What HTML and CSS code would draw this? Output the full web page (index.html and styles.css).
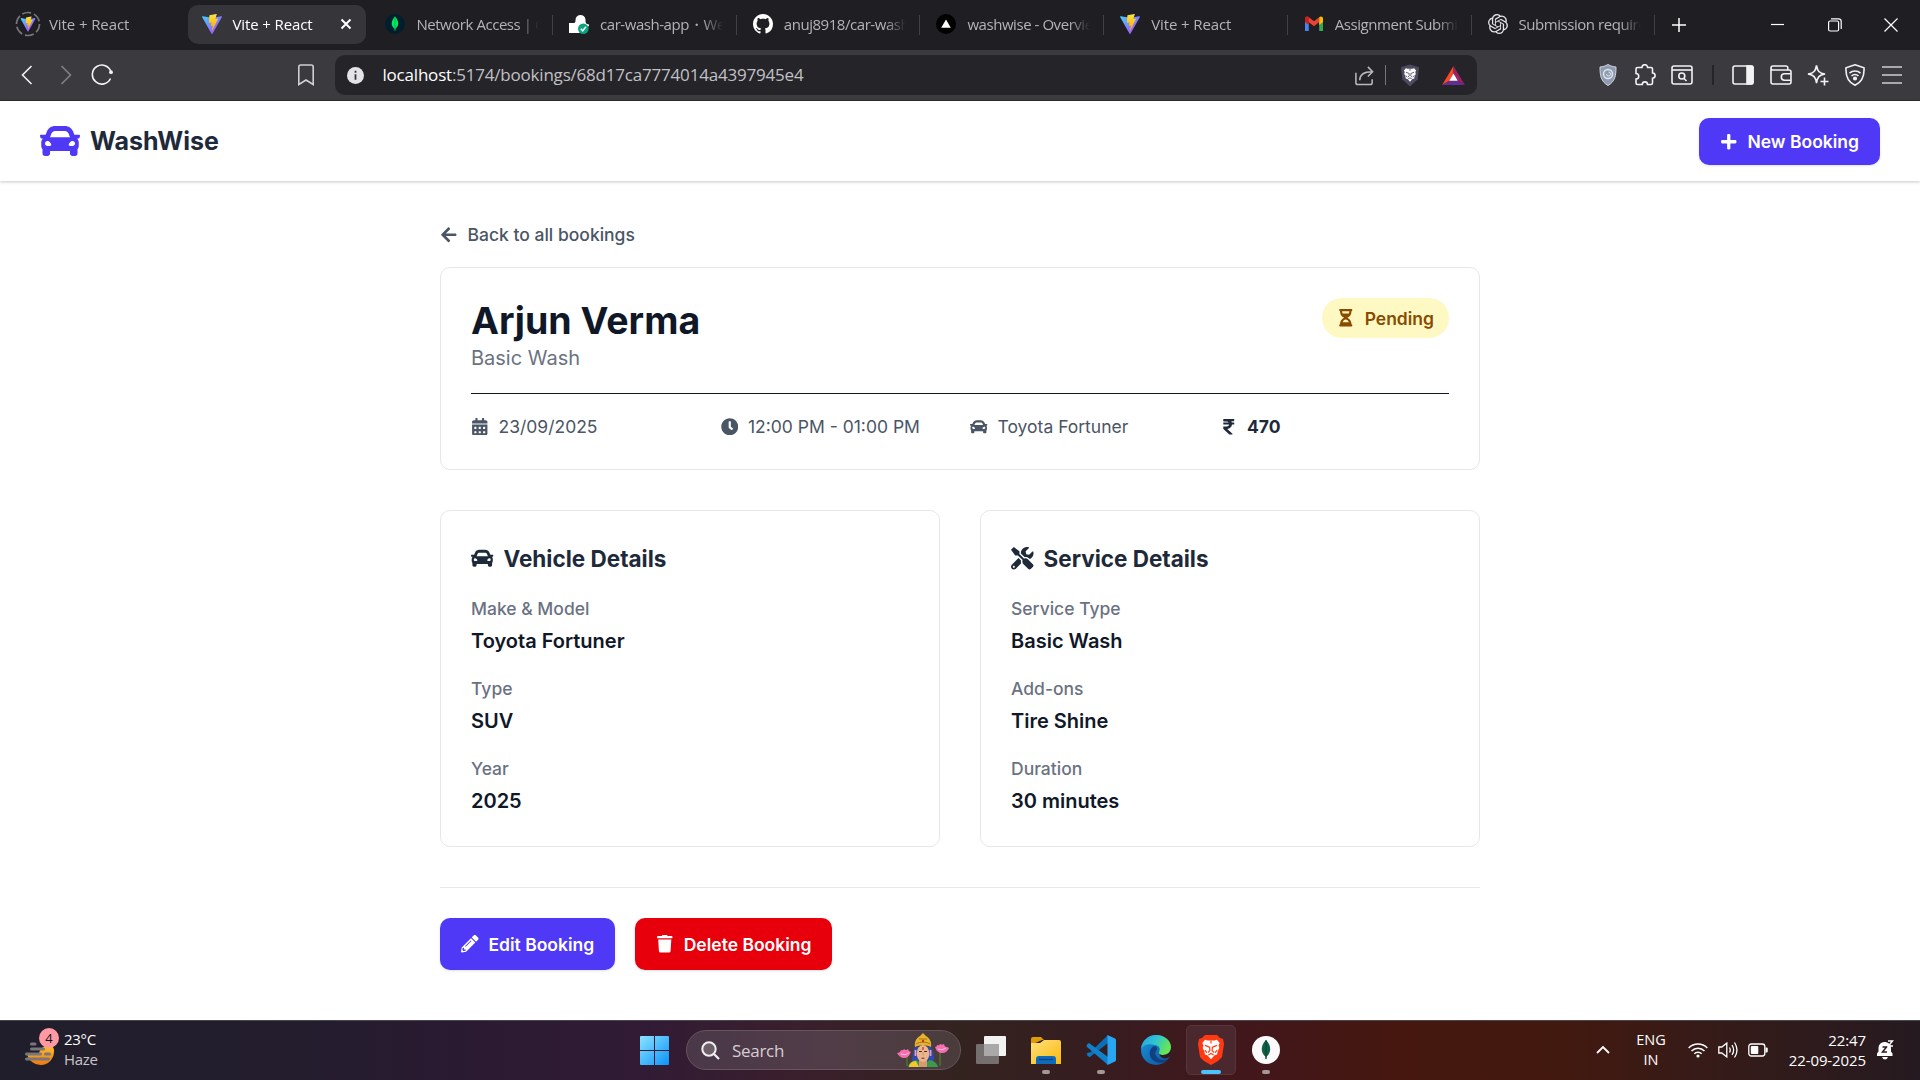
FILE: index.html
```html
<!DOCTYPE html>
<html lang="en">
<head>
<meta charset="utf-8">
<title>WashWise</title>
<link rel="stylesheet" href="styles.css">
</head>
<body>
<svg class="defs" aria-hidden="true">
  <defs>
    <linearGradient id="vg1" x1="0" y1="0" x2="1" y2="1"><stop offset="0" stop-color="#41d1ff"/><stop offset="1" stop-color="#bd34fe"/></linearGradient>
    <linearGradient id="vg2" x1="0" y1="0" x2="0" y2="1"><stop offset="0" stop-color="#ffea83"/><stop offset=".1" stop-color="#ffdd35"/><stop offset="1" stop-color="#ffa800"/></linearGradient>
    <linearGradient id="win" x1="0" y1="0" x2="1" y2="1"><stop offset="0" stop-color="#8be4ff"/><stop offset="1" stop-color="#0a92fa"/></linearGradient>
    <linearGradient id="fold" x1="0" y1="0" x2="1" y2="1"><stop offset="0" stop-color="#ffe27a"/><stop offset="1" stop-color="#fcb80f"/></linearGradient>
    <linearGradient id="edge1" x1="0" y1="0" x2="1" y2=".4"><stop offset="0" stop-color="#2a9fe0"/><stop offset=".5" stop-color="#2dc3d6"/><stop offset="1" stop-color="#66e650"/></linearGradient>
    <linearGradient id="edge2" x1="0" y1="0" x2="1" y2="1"><stop offset="0" stop-color="#1a96dc"/><stop offset="1" stop-color="#0c509c"/></linearGradient>
    <linearGradient id="sun" x1="0" y1="0" x2="0" y2="1"><stop offset="0" stop-color="#fdc02f"/><stop offset="1" stop-color="#f0760f"/></linearGradient>
  </defs>
  <symbol id="vite" viewBox="0 0 256 257">
    <path fill="url(#vg1)" d="M255 38 134 255c-3 4-9 4-12 0L1 38c-3-5 1-11 7-10l119 21a7 7 0 0 0 3 0l116-21c6-1 11 5 9 10Z"/>
    <path fill="url(#vg2)" d="M185 0 97 17a3 3 0 0 0-3 3l-5 92a3 3 0 0 0 4 3l25-5c2-1 4 1 4 3l-8 36c0 3 2 5 4 4l16-4c2-1 5 1 4 4l-12 57c-1 3 4 5 6 2l1-2 72-145c1-2-1-5-4-4l-25 5c-3 0-4-2-4-4l17-58c0-2-2-4-4-4Z"/>
  </symbol>
  <symbol id="car" viewBox="0 0 512 512"><path fill="currentColor" d="M499.99 176h-59.87l-16.64-41.6C406.38 91.63 365.57 64 319.5 64h-127c-46.06 0-86.88 27.63-103.99 70.4L71.87 176H12.01C4.2 176-1.53 183.34.37 190.91l6 24C7.7 220.25 12.5 224 18.01 224h20.07C24.65 235.73 16 252.78 16 272v48c0 16.12 6.16 30.67 16 41.93V416c0 17.67 14.33 32 32 32h32c17.67 0 32-14.33 32-32v-32h256v32c0 17.67 14.33 32 32 32h32c17.67 0 32-14.33 32-32v-54.07c9.84-11.25 16-25.8 16-41.93v-48c0-19.22-8.65-36.27-22.07-48H494c5.51 0 10.31-3.75 11.64-9.09l6-24c1.89-7.57-3.84-14.91-11.65-14.91zm-352.06-17.83c7.29-18.22 24.94-30.17 44.57-30.17h127c19.63 0 37.28 11.95 44.57 30.17L384 208H128l19.93-49.83zM96 319.8c-19.2 0-32-12.76-32-31.9S76.8 256 96 256s48 28.71 48 47.85-28.8 15.95-48 15.95zm320 0c-19.2 0-48 3.19-48-15.95S396.8 256 416 256s32 12.76 32 31.9-12.8 31.9-32 31.9z"/></symbol>
  <symbol id="lion" viewBox="0 0 24 24"><path d="M6.500 3 9 3.800h6l2.500-.8L20 6l-1 2 .6 2.500-1.600 3.500-.4 2.500-2.300.8L12 21l-3.300-3.700-2.300-.8L6 14l-1.600-3.500L5 8 4 6Z" fill="#fff"/><g fill="none" stroke="var(--face,#ff3a12)" stroke-width="1.100"><path d="m6.500 8.200 4 1.600M17.500 8.200l-4 1.600M10.700 9.500l.3 3.500-1.800 1.800M13.300 9.500 13 13l1.800 1.800M6.300 12.500l2 2.300M17.700 12.500l-2 2.300M9.500 17l2.500-1.300L14.500 17M12 4v2.500"/></g></symbol>
</svg>

<div class="tabs">
  <div class="tab"><svg class="fav fav-load" viewBox="0 0 26 26"><circle cx="13" cy="13" r="11.500" fill="none" stroke="#77767b" stroke-width="1.700" stroke-dasharray="9 3"/><use href="#vite" x="5.500" y="5" width="15" height="16"/></svg><span class="tab-title wide">Vite + React</span></div>
  <div class="tab active"><svg class="fav"><use href="#vite" width="20" height="20"/></svg><span class="tab-title wide">Vite + React</span><svg class="close" viewBox="0 0 12 12"><path d="M1.500 1.500l9 9M10.500 1.500l-9 9" stroke="#fff" stroke-width="2"/></svg></div>
  <div class="tab sep"><svg class="fav" viewBox="0 0 20 20"><circle cx="10" cy="10" r="10" fill="#001e2b"/><path d="M10 2.500c-4.500 5-4 9.500-.5 12.200L10 17.500l.5-2.800C14 12 14.500 7.500 10 2.500Z" fill="#00ed64"/><path d="M10 2.500v14" stroke="#00a54a" stroke-width=".8"/></svg><span class="tab-title">Network Access | Cl</span></div>
  <div class="tab sep"><svg class="fav" viewBox="0 0 20 20"><path d="M0 9h5c1 0 1.500-1 1.500-2.500a5 5 0 0 1 10-1c0 4 .5 4.500 3.500 5V12l-10 7H0Z" fill="#fff"/><circle cx="14.300" cy="14.700" r="5.300" fill="#0aa37f"/><path d="m11.800 14.800 1.900 2 3.300-4" fill="none" stroke="#fff" stroke-width="1.500"/></svg><span class="tab-title">car-wash-app・We</span></div>
  <div class="tab sep"><svg class="fav" viewBox="0 0 16 16"><path fill="#fff" d="M8 0C3.580 0 0 3.580 0 8c0 3.540 2.290 6.530 5.470 7.590.4.070.55-.17.55-.38 0-.19-.01-.82-.01-1.490-2.010.37-2.530-.49-2.690-.94-.09-.23-.48-.94-.82-1.130-.28-.15-.68-.52-.01-.53.63-.01 1.080.58 1.230.82.72 1.210 1.870.87 2.330.66.07-.52.28-.87.51-1.070-1.780-.2-3.640-.89-3.640-3.950 0-.87.31-1.590.82-2.150-.08-.2-.36-1.020.08-2.120 0 0 .67-.21 2.200.82.640-.18 1.320-.27 2-.27s1.360.09 2 .27c1.530-1.040 2.200-.82 2.200-.82.44 1.100.16 1.920.08 2.120.51.56.82 1.270.82 2.150 0 3.070-1.870 3.750-3.650 3.950.29.25.54.73.54 1.480 0 1.070-.01 1.930-.01 2.200 0 .21.15.46.55.38A8.010 8.010 0 0 0 16 8c0-4.420-3.580-8-8-8Z"/></svg><span class="tab-title">anuj8918/car-wash</span></div>
  <div class="tab sep"><svg class="fav" viewBox="0 0 20 20"><circle cx="10" cy="10" r="10" fill="#000"/><path d="m10 5.500 4.800 8.300H5.200Z" fill="#fff"/></svg><span class="tab-title">washwise - Overvie</span></div>
  <div class="tab sep"><svg class="fav"><use href="#vite" width="20" height="20"/></svg><span class="tab-title wide">Vite + React</span></div>
  <div class="tab sep"><svg class="fav" viewBox="0 0 20 20"><path d="M1 4v13h3.800V8Z" fill="#4285f4"/><path d="M19 4v13h-3.800V8Z" fill="#34a853"/><path d="M1 8.500V4.700C1 2.500 3.400 2 4.800 3.200L10 7.200l5.200-4v4.900L10 12.200 4.800 8.200Z" fill="#ea4335"/><path d="M1 5v3l3.800 3V3.200C3 2 1 2.700 1 5Z" fill="#c5221f"/><path d="M19 5v3l-3.800 3V3.200C17 2 19 2.700 19 5Z" fill="#fbbc04"/></svg><span class="tab-title">Assignment Submi</span></div>
  <div class="tab sep"><svg class="fav" viewBox="0 0 24 24"><path fill="#e4e4e6" d="M22.282 9.821a5.985 5.985 0 0 0-.516-4.910 6.046 6.046 0 0 0-6.510-2.900A6.065 6.065 0 0 0 4.981 4.182a5.985 5.985 0 0 0-3.998 2.900 6.046 6.046 0 0 0 .743 7.097 5.980 5.980 0 0 0 .510 4.911 6.051 6.051 0 0 0 6.515 2.900A5.985 5.985 0 0 0 13.260 24a6.056 6.056 0 0 0 5.772-4.206 5.990 5.990 0 0 0 3.998-2.900 6.056 6.056 0 0 0-.748-7.073zM13.260 22.430a4.476 4.476 0 0 1-2.877-1.040l.142-.081 4.778-2.758a.795.795 0 0 0 .393-.681v-6.737l2.020 1.169a.071.071 0 0 1 .038.052v5.583a4.504 4.504 0 0 1-4.494 4.493zM3.600 18.304a4.471 4.471 0 0 1-.535-3.014l.142.085 4.783 2.759a.771.771 0 0 0 .781 0l5.843-3.369v2.332a.080.080 0 0 1-.033.062L9.740 19.950a4.499 4.499 0 0 1-6.140-1.646zM2.341 7.896a4.485 4.485 0 0 1 2.366-1.973V11.600a.766.766 0 0 0 .388.676l5.815 3.355-2.020 1.168a.076.076 0 0 1-.071 0l-4.830-2.786A4.504 4.504 0 0 1 2.341 7.872zm16.596 3.855-5.833-3.387L15.119 7.200a.076.076 0 0 1 .071 0l4.830 2.791a4.494 4.494 0 0 1-.676 8.105v-5.678a.790.790 0 0 0-.407-.667zm2.011-3.023-.142-.085-4.774-2.782a.776.776 0 0 0-.785 0L9.409 9.230V6.897a.066.066 0 0 1 .028-.061l4.830-2.787a4.499 4.499 0 0 1 6.680 4.660zM8.307 12.863l-2.020-1.164a.080.080 0 0 1-.038-.057V6.075a4.499 4.499 0 0 1 7.375-3.453l-.142.080L8.704 5.460a.795.795 0 0 0-.393.681zm1.097-2.365 2.602-1.500 2.607 1.500v2.999l-2.597 1.500-2.607-1.500Z"/></svg><span class="tab-title">Submission require</span></div>
  <svg class="newtab" viewBox="0 0 14 14"><path d="M7 0v14M0 7h14" stroke="#fff" stroke-width="1.500"/></svg>
  <div class="winctl">
    <svg viewBox="0 0 14 14"><path d="M0 6.500h13" stroke="#fff" stroke-width="1.200"/></svg>
    <svg viewBox="0 0 14 14" fill="none" stroke="#fff" stroke-width="1.200"><rect x=".6" y="3" width="10" height="10" rx="1.500"/><path d="M3 .8h7.500c1.800 0 2.700 1 2.700 2.700V11"/></svg>
    <svg viewBox="0 0 14 14"><path d="M.5.5l13 13M13.500.5l-13 13" stroke="#fff" stroke-width="1.200"/></svg>
  </div>
</div>

<div class="toolbar">
  <span class="slot"><svg viewBox="0 0 22 22" class="ln"><path d="m14.500 2-9 9 9 9"/></svg></span>
  <span class="slot"><svg viewBox="0 0 22 22" class="ln dim"><path d="m7.500 2 9 9-9 9"/></svg></span>
  <span class="slot"><svg viewBox="0 0 22 22" class="ln"><path d="M19.500 14.500A9.500 9.500 0 1 1 20 8"/><circle cx="20" cy="8.200" r="1.900" fill="#f2f2f4" stroke="none"/></svg></span>
  <span class="slot mark"><svg viewBox="0 0 22 22" class="ln soft"><path d="M3.800 20.500V3a2 2 0 0 1 2-2h10.400a2 2 0 0 1 2 2v17.500L11 16Z"/></svg></span>
  <div class="urlbar">
    <svg class="info" viewBox="0 0 17 17"><circle cx="8.500" cy="8.500" r="8.500" fill="#e3e3e8"/><path d="M8.500 7.300v5.500M8.500 3.800v2" stroke="#36363c" stroke-width="1.800"/></svg>
    <span class="url"><b>localhost</b>:5174/bookings/68d17ca7774014a4397945e4</span>
    <svg class="u-share" viewBox="0 0 22 22" fill="none" stroke="#b9b9be" stroke-width="1.600"><path d="M2 8v10.500a2 2 0 0 0 2 2h13a2 2 0 0 0 2-2V15M6 16c0-6 4-9 13-9M14.500 2 19.500 7l-5 5"/></svg>
    <i class="u-sep"></i>
    <svg class="u-lion" viewBox="0 0 22 24"><path d="M11 0 21 3l-1.500 13L11 24 2.500 16 1 3Z" fill="#4b4a60"/><use href="#lion" x="1" y="1" width="20" height="21"/></svg>
    <svg class="u-bat" viewBox="0 0 24 20"><path d="M12 0 0 20l7.500-4.500L12 8Z" fill="#ff4724"/><path d="M12 0v8l4.500 7.500L24 20Z" fill="#9e1f63"/><path d="M0 20h24l-7.500-4.500h-9Z" fill="#662d91"/><path d="m12 8 4.500 7.500h-9Z" fill="#fff"/></svg>
  </div>
  <div class="actions">
    <span class="slot"><svg viewBox="0 0 22 22"><path d="M11 .5c3 1.700 5 2.200 8 2.500 0 9-1 14.500-8 18.500C4 17.500 3 12 3 3c3-.3 5-.8 8-2.500Z" fill="#8f9bb0" stroke="#cfd5de"/><circle cx="11" cy="10" r="4.500" fill="none" stroke="#e3e7ee" stroke-width="1.500"/><path d="M9.500 10a2 2 0 1 0 2-2" fill="none" stroke="#e3e7ee"/></svg></span>
    <span class="slot"><svg viewBox="0 0 22 22" class="ln"><path d="M4 3.500h4a2.800 2.800 0 0 1 5.600 0H17a1.500 1.500 0 0 1 1.500 1.500v4a2.500 2.500 0 0 1 0 5.200V19a1.500 1.500 0 0 1-1.500 1.500h-3.500a2.600 2.600 0 0 0-5.200 0H3.500A1.500 1.500 0 0 1 2 19v-4a2.600 2.600 0 0 0 0-5.500V5a1.500 1.500 0 0 1 1.500-1.500Z"/></svg></span>
    <span class="slot"><svg viewBox="0 0 22 22" class="ln"><rect x="1" y="2" width="20" height="18" rx="2"/><path d="M1 6h20"/><circle cx="10.800" cy="12" r="3"/><path d="m13 14.500 2.500 2.500"/></svg></span>
    <i class="tb-sep"></i>
    <span class="slot panel"><svg viewBox="0 0 22 22" class="ln"><rect x="1" y="2" width="20" height="18" rx="2"/><path d="M15 2h4.500A1.500 1.500 0 0 1 21 3.500v15a1.500 1.500 0 0 1-1.500 1.500H15Z" fill="#f2f2f4"/></svg></span>
    <span class="slot"><svg viewBox="0 0 22 22" class="ln"><path d="M1 4.500V18a2 2 0 0 0 2 2h16a2 2 0 0 0 2-2V8a2 2 0 0 0-2-2H3a1.800 1.800 0 0 1 0-4h13a1.800 1.800 0 0 1 1.800 1.800V6M21 9.800h-6.500a3.200 3.200 0 0 0 0 6.400H21"/></svg></span>
    <span class="slot"><svg viewBox="0 0 22 22" class="ln"><path d="M9.500 1.500c1 5.500 2.500 7.500 8.500 8.500-6 1-7.500 3-8.500 9-1-6-2.500-8-8.500-9 6-1 7.500-3 8.500-8.500ZM17.500 13.500v8M13.500 17.500h8"/></svg></span>
    <span class="slot"><svg viewBox="0 0 22 22" class="ln"><path d="m11 .8 9 3c.5 8-1.500 14-9 17.500C3.500 17.800 1.500 11.800 2 3.800Z"/><path d="M5.500 9.200a8 8 0 0 1 11 0M7.500 12a5 5 0 0 1 7 0"/><circle cx="11" cy="14.500" r="1.300" fill="#f2f2f4"/></svg></span>
    <span class="slot"><svg viewBox="0 0 22 22" class="ln soft"><path d="M1 3h20M1 11h20M1 19h20"/></svg></span>
  </div>
</div>

<div class="page">
  <header class="site-head">
    <div class="brand"><svg class="brand-icon"><use href="#car"/></svg><span>WashWise</span></div>
    <button class="btn btn-new"><svg class="ico" viewBox="0 0 448 512"><path fill="currentColor" d="M416 208H272V64c0-17.670-14.330-32-32-32h-32c-17.670 0-32 14.330-32 32v144H32c-17.670 0-32 14.330-32 32v32c0 17.670 14.330 32 32 32h144v144c0 17.670 14.330 32 32 32h32c17.670 0 32-14.330 32-32V304h144c17.670 0 32-14.330 32-32v-32c0-17.670-14.330-32-32-32z"/></svg>New Booking</button>
  </header>
  <main class="content">
    <a class="back"><svg class="ico" viewBox="0 0 448 512"><path fill="currentColor" d="M257.500 445.100l-22.200 22.200c-9.400 9.400-24.600 9.400-33.900 0L7 273c-9.400-9.400-9.400-24.600 0-33.900L201.400 44.700c9.400-9.400 24.600-9.400 33.900 0l22.200 22.200c9.500 9.500 9.300 25-.4 34.300L136.600 216H424c13.300 0 24 10.700 24 24v32c0 13.300-10.700 24-24 24H136.600l120.500 114.800c9.800 9.300 10 24.800.4 34.300z"/></svg>Back to all bookings</a>
    <section class="card summary">
      <div class="summary-top">
        <div><h1>Arjun Verma</h1><p class="service">Basic Wash</p></div>
        <span class="pill"><svg class="ico" viewBox="0 0 384 512"><path fill="currentColor" d="M360 0H24C10.745 0 0 10.745 0 24v16c0 13.255 10.745 24 24 24 0 90.965 51.016 167.734 120.842 192C75.016 280.266 24 357.035 24 448c-13.255 0-24 10.745-24 24v16c0 13.255 10.745 24 24 24h336c13.255 0 24-10.745 24-24v-16c0-13.255-10.745-24-24-24 0-90.965-51.016-167.734-120.842-192C308.984 231.734 360 154.965 360 64c13.255 0 24-10.745 24-24V24c0-13.255-10.745-24-24-24zm-75.078 384H99.080c17.059-46.797 52.096-80 92.920-80 40.821 0 75.862 33.196 92.922 80zm.019-256H99.078C91.988 108.548 88 86.748 88 64h208c0 22.805-3.987 44.587-11.059 64z"/></svg>Pending</span>
      </div>
      <div class="facts">
        <div class="fact"><svg class="ico" viewBox="0 0 448 512"><path fill="currentColor" fill-rule="evenodd" d="M0 464c0 26.500 21.500 48 48 48h352c26.500 0 48-21.500 48-48V192H0v272zm320-196q0-12 12-12h40q12 0 12 12v40q0 12-12 12h-40q-12 0-12-12zm0 128q0-12 12-12h40q12 0 12 12v40q0 12-12 12h-40q-12 0-12-12zM192 268q0-12 12-12h40q12 0 12 12v40q0 12-12 12h-40q-12 0-12-12zm0 128q0-12 12-12h40q12 0 12 12v40q0 12-12 12h-40q-12 0-12-12zM64 268q0-12 12-12h40q12 0 12 12v40q0 12-12 12H76q-12 0-12-12zm0 128q0-12 12-12h40q12 0 12 12v40q0 12-12 12H76q-12 0-12-12zM400 64h-48V16c0-8.800-7.200-16-16-16h-32c-8.800 0-16 7.200-16 16v48H160V16c0-8.800-7.200-16-16-16h-32c-8.800 0-16 7.200-16 16v48H48C21.500 64 0 85.500 0 112v48h448v-48c0-26.500-21.500-48-48-48z"/></svg>23/09/2025</div>
        <div class="fact"><svg class="ico" viewBox="0 0 512 512"><path fill="currentColor" d="M256,8C119,8,8,119,8,256S119,504,256,504,504,393,504,256,393,8,256,8Zm92.490,313h0l-20,25a16,16,0,0,1-22.490,2.500h0l-67-49.720a40,40,0,0,1-15-31.230V112a16,16,0,0,1,16-16h32a16,16,0,0,1,16,16V256l58,42.500A16,16,0,0,1,348.490,321Z"/></svg>12:00 PM - 01:00 PM</div>
        <div class="fact"><svg class="ico"><use href="#car"/></svg>Toyota Fortuner</div>
        <div class="fact price"><svg class="ico" viewBox="0 0 320 512"><path fill="currentColor" d="M308 96c6.627 0 12-5.373 12-12V44c0-6.627-5.373-12-12-12H12C5.373 32 0 37.373 0 44v44.748c0 6.627 5.373 12 12 12h85.280c27.308 0 48.261 9.958 60.970 27.252H12c-6.627 0-12 5.373-12 12v40c0 6.627 5.373 12 12 12h158.757c-6.217 36.086-32.961 58.632-74.757 58.632H12c-6.627 0-12 5.373-12 12v53.012c0 3.349 1.400 6.546 3.861 8.818l165.052 152.356a12.001 12.001 0 0 0 8.139 3.182h82.562c10.924 0 16.166-13.408 8.139-20.818L116.871 319.906c76.499-2.340 131.144-53.395 138.318-127.906H308c6.627 0 12-5.373 12-12v-40c0-6.627-5.373-12-12-12h-58.690c-3.486-11.541-8.280-22.246-14.252-32H308z"/></svg>470</div>
      </div>
    </section>
    <div class="details">
      <section class="card">
        <h2><svg class="ico"><use href="#car"/></svg>Vehicle Details</h2>
        <dl>
          <div><dt>Make &amp; Model</dt><dd>Toyota Fortuner</dd></div>
          <div><dt>Type</dt><dd>SUV</dd></div>
          <div><dt>Year</dt><dd>2025</dd></div>
        </dl>
      </section>
      <section class="card">
        <h2><svg class="ico" viewBox="0 0 512 512"><path fill="currentColor" d="M501.100 395.700L384 278.600c-23.100-23.100-57.600-27.600-85.400-13.900L192 158.100V96L64 0 0 64l96 128h62.100l106.600 106.600c-13.600 27.800-9.200 62.300 13.900 85.400l117.100 117.100c14.600 14.600 38.200 14.600 52.700 0l52.700-52.700c14.500-14.600 14.500-38.200 0-52.700zM331.700 225c28.300 0 54.900 11 74.900 31l19.400 19.400c15.800-6.900 30.800-16.500 43.800-29.500 37.100-37.100 49.700-89.300 37.900-136.700-2.200-9-13.500-12.100-20.100-5.500l-74.400 74.400-67.900-11.300L334 98.900l74.400-74.400c6.600-6.600 3.400-17.900-5.700-20.200-47.400-11.700-99.600.9-136.600 37.900-28.500 28.500-41.900 66.100-41.200 103.600l82.100 82.100c8.100-1.900 16.500-2.900 24.700-2.900zm-103.900 82l-56.700-56.700L18.700 402.800c-25 25-25 65.500 0 90.500s65.500 25 90.500 0l123.600-123.600c-7.600-19.900-9.900-41.600-5-62.700zM64 472c-13.200 0-24-10.800-24-24 0-13.300 10.700-24 24-24s24 10.700 24 24c0 13.200-10.700 24-24 24z"/></svg>Service Details</h2>
        <dl>
          <div><dt>Service Type</dt><dd>Basic Wash</dd></div>
          <div><dt>Add-ons</dt><dd>Tire Shine</dd></div>
          <div><dt>Duration</dt><dd>30 minutes</dd></div>
        </dl>
      </section>
    </div>
    <div class="buttons">
      <button class="btn btn-tall"><svg class="ico" viewBox="0 0 512 512"><path fill="currentColor" d="M497.900 142.100l-46.100 46.100c-4.700 4.700-12.300 4.700-17 0l-111-111c-4.700-4.700-4.700-12.300 0-17l46.100-46.100c18.700-18.700 49.100-18.700 67.900 0l60.100 60.100c18.800 18.700 18.800 49.100 0 67.900zM284.200 99.800L21.600 362.400.4 483.900c-2.900 16.400 11.400 30.600 27.800 27.800l121.500-21.300 262.600-262.600c4.700-4.700 4.700-12.300 0-17l-111-111c-4.800-4.700-12.400-4.700-17.100 0zM124.100 339.900c-5.500-5.500-5.500-14.300 0-19.800l154-154c5.500-5.500 14.300-5.500 19.800 0s5.500 14.300 0 19.800l-154 154c-5.500 5.500-14.300 5.500-19.800 0zM88 424h48v36.300l-64.500 11.300-31.100-31.100L51.700 376H88v48z"/></svg>Edit Booking</button>
      <button class="btn btn-tall btn-danger"><svg class="ico" viewBox="0 0 448 512"><path fill="currentColor" d="M432 32H312l-9.400-18.700A24 24 0 0 0 281.100 0H166.800a23.720 23.720 0 0 0-21.400 13.300L136 32H16A16 16 0 0 0 0 48v32a16 16 0 0 0 16 16h416a16 16 0 0 0 16-16V48a16 16 0 0 0-16-16zM53.200 467a48 48 0 0 0 47.900 45h245.800a48 48 0 0 0 47.900-45L416 128H32z"/></svg>Delete Booking</button>
    </div>
  </main>
</div>

<div class="taskbar">
  <div class="weather">
    <div class="w-icon"><svg viewBox="0 0 30 26"><path d="M2 12A13 13 0 0 0 29 9c0-6-12-7-15 3Z" fill="url(#sun)"/><path d="M6.500 3h3.500M6.500 8h12M1.500 13h14M1.500 18h22M20.500 13h4" stroke="#77777c" stroke-width="3" stroke-linecap="round"/></svg><span class="badge">4</span></div>
    <div class="w-text"><span>23°C</span><span class="w-sub">Haze</span></div>
  </div>
  <div class="dock">
    <svg class="start" viewBox="0 0 29 29"><path fill="url(#win)" d="M1 0h13v14H0V1a1 1 0 0 1 1-1ZM15 0h13a1 1 0 0 1 1 1v13H15ZM0 15h14v14H1a1 1 0 0 1-1-1ZM15 15h14v13a1 1 0 0 1-1 1H15Z"/></svg>
    <div class="search">
      <svg class="mag" viewBox="0 0 19 19"><circle cx="8" cy="8" r="6.700" fill="#6d5f68" stroke="#f1eef0" stroke-width="2"/><path d="m13 13 5 5" stroke="#f1eef0" stroke-width="2.200"/></svg>
      <span class="search-text">Search</span>
      <svg class="deity" viewBox="0 0 52 34">
        <path d="M10 33V22M43 33V18" stroke="#4d7a2a" stroke-width="1.300"/>
        <path d="M16 32c-2-6 0-12 2-18h16c3 6 4 12 2 18Z" fill="#2f4bb0"/>
        <path d="M11 34c1-4 4-6 8-7l7 4 7-4c4 1 7 3 8 7Z" fill="#3c9b49"/><path d="M12 34c0-3 3-6 7-6l3 6Z" fill="#f1c72d"/><path d="M22 34v-7h8v7Z" fill="#d99a6c"/>
        <ellipse cx="26" cy="20.500" rx="6.300" ry="8.500" fill="#eab68d"/>
        <path d="M18 14C17 8 20 5 23 3l3-3 3 3c3 2 6 5 5 11-4-2.500-12-2.500-16 0Z" fill="#e7b52c"/><path d="M19 11c4-2.500 10-2.500 14 0M22 6h8" stroke="#9e661b" stroke-width=".9" fill="none"/>
        <circle cx="26" cy="8" r="1.200" fill="#c0392b"/><path d="M25.400 14h1.200v3h-1.200Z" fill="#c4262c"/><path d="M22 18.500h2.800M27.200 18.500H30" stroke="#3c241b" stroke-width="1.100"/><path d="M24.500 25.300h3" stroke="#b53737" stroke-width="1.300"/><path d="M26 19v3.500" stroke="#c98a5e" stroke-width=".8"/>
        <path d="M18.500 17v6M33.500 17v6" stroke="#e79ac0" stroke-width="1.800"/>
        <path d="M0 20q3 0 4-3 2 1 3-1 2 2 4 0 0 2 3 3-1 1-1 2-2 4-6 4T0 20ZM38 14q2 0 2-2 2 1 3-1 2 1 4 0 0 2 2 3 2 0 3 1-2 5-7 5t-7-6Z" fill="#f66fb0"/><path d="M4 21q4 2 8-1M41 16q4 2 8-1" stroke="#ffc0dc" fill="none"/>
      </svg>
    </div>
    <span class="app"><svg viewBox="0 0 30 30"><rect x="8" y="1" width="22" height="20" rx="1" fill="#f2f2f2"/><rect x="0" y="9" width="23" height="20" rx="1" fill="#7c7878" fill-opacity=".9"/><path d="M8 9h15v12H8Z" fill="#aaa8a8"/></svg></span>
    <span class="app run"><svg viewBox="0 0 30 30"><path d="M0 4a2 2 0 0 1 2-2h8l3 3h-2L0 10Z" fill="#dd9b08"/><path d="M0 8h9l4-3h15a2 2 0 0 1 2 2v22H0Z" fill="url(#fold)"/><path d="M5 29v-5a3 3 0 0 1 3-3h14a3 3 0 0 1 3 3v5Z" fill="#0f6cbd"/><path d="M8 24.500h14" stroke="#0a3f7e" stroke-width="1.300"/></svg></span>
    <span class="app run"><svg viewBox="0 0 30 30"><path fill="#0a6fb8" d="M1 20.500 22 0v8L4 22Z"/><path fill="#1180ca" d="m1 9.500 2-1.500L22 22v8L.5 11.500Z"/><path fill="#0f78c2" d="m.5 18.500 2.500 3.500 3-2.300-3-2.500Z"/><path d="m21.500 0 7 3.200a2 2 0 0 1 1.500 2v19.600a2 2 0 0 1-1.500 2L21.500 30Z" fill="#29a6f1"/></svg></span>
    <span class="app"><svg viewBox="0 0 30 30"><circle cx="15" cy="15" r="15" fill="url(#edge2)"/><path d="M0 14C1 5 8 0 15 0c9 0 15 6 15 12 0 5-4 8-8 8-3 0-5-1-4-3 2-3 0-7-4-7-6-2-12 0-14 4Z" fill="url(#edge1)"/><path d="M13 11c-6 3-6 13 2 16 5 2 9 0 12-3-4 2-9 1-11-2-2-2-2-4-1-6 2-2 1-5-2-5Z" fill="#123f82"/><path d="M30 13c0 4-3 7-8 7-3 0-5-1-4-3 0 6 6 8 10 5l2-3Z" fill="#33191d"/></svg></span>
    <span class="app run current"><svg viewBox="0 0 30 30"><path d="M9 0h12l3 3 3 1 1 5-2 13-4 4-7 4-7-4-4-4L2 9l1-5 3-1Z" fill="#ff3a12"/><use href="#lion" x="2" y="1" width="26" height="27"/></svg></span>
    <span class="app run"><svg viewBox="0 0 30 30"><circle cx="15" cy="15" r="14" fill="#fafafa"/><path d="M15 5c-6 6-5 13-.7 16.500L15 25l.7-3.500C20 18 21 11 15 5Z" fill="#116149"/><path d="M15 5v19" stroke="#06402b"/></svg></span>
  </div>
  <div class="tray">
    <svg class="chev" viewBox="0 0 14 9"><path d="m1 8 6-6 6 6" fill="none" stroke="#fff" stroke-width="1.800"/></svg>
    <div class="lang"><span>ENG</span><span>IN</span></div>
    <svg class="wifi" viewBox="0 0 20 16" fill="none" stroke="#fff" stroke-width="1.500"><path d="M.7 6a13 13 0 0 1 18.600 0M3.500 9a9 9 0 0 1 13 0M6.300 11.800a5.200 5.200 0 0 1 7.400 0"/><circle cx="10" cy="14" r="1.600" fill="#fff" stroke="none"/></svg>
    <svg class="vol" viewBox="0 0 20 18" fill="none" stroke="#fff" stroke-width="1.300"><path d="M.8 6v6h3l5 4V2l-5 4ZM11.500 6.500q1.500 2.500 0 5M14 4.200q3.300 4.800 0 9.600M16.500 1.500q5 7.500 0 15"/></svg>
    <svg class="batt" viewBox="0 0 20 14"><rect x=".8" y="1" width="16" height="12" rx="2.500" fill="none" stroke="#fff" stroke-width="1.300"/><rect x="2.800" y="3" width="7.500" height="8" rx="1" fill="#fff"/><path d="M17.500 4.500h1.200q1 0 1 1v3q0 1-1 1h-1.200Z" fill="#fff"/></svg>
    <div class="clock"><span>22:47</span><span>22-09-2025</span></div>
    <svg class="bell" viewBox="0 0 18 20"><path d="M1 15v-1.500l1.500-2V8a5.700 5.700 0 0 1 6-6c3 0 6.500 2 6.500 6v3.500l1.500 2V16H1ZM6 17h6q-1 2.500-3 2.500T6 17Z" fill="#fff"/><path d="M6.500 7h4L6.500 12h4.500" stroke="#33191a" stroke-width="1.500" fill="none"/><path d="M12 1h4.500L12.500 6h4.500" stroke="#fff" stroke-width="1.400" fill="none"/></svg>
  </div>
</div>
</body>
</html>
```
FILE: styles.css
```css
/* 1rem follows the 125% display scale: 16px * 1.25 */
html { font-size: 20px; }
* { box-sizing: border-box; }
body {
  margin: 0;
  width: 1920px;
  height: 1080px;
  overflow: hidden;
  display: flex;
  flex-direction: column;
  background: #fff;
  font-family: "Open Sans", "Noto Sans", sans-serif;
}
h1, h2, p, dl, dd { margin: 0; }
svg { flex: none; display: block; }
.defs { position: absolute; width: 0; height: 0; }

/* Tab strip */
.tabs { flex: none; height: 50px; background: #1f1e23; display: flex; align-items: center; padding-left: 2px; }
.tab { flex: none; width: 183.700px; height: 39px; margin-bottom: 1px; padding: 0 13px 1px 16px; display: flex; align-items: center; position: relative; color: #b4b4b8; font-size: 15px; letter-spacing: -.45px; }
.tab.active { width: 178px; margin: 0 3px 1px 2.700px; padding: 0 14px 1px; border-radius: 10px; background: #36353a; color: #fff; }
.tab.active .fav { margin-right: 10px; }
.tab.sep { border-right: 1px solid transparent; }
.tab.sep::after { content: ""; position: absolute; right: -1px; top: 10px; width: 1px; height: 20px; background: #414046; }
.fav { width: 20px; height: 20px; margin-right: 11px; }
.fav-load { width: 26px; height: 26px; margin: 0 8px 0 -3px; }
.tab-title { flex: 1; overflow: hidden; white-space: nowrap; -webkit-mask-image: linear-gradient(90deg, #000 83%, transparent 100%); mask-image: linear-gradient(90deg, #000 83%, transparent 100%); }
.tab-title.wide { letter-spacing: -.1px; }
.close { width: 12px; height: 12px; }
.newtab { width: 14px; height: 14px; margin-left: 17px; }
.winctl { margin-left: auto; padding-right: 22px; display: flex; gap: 42.500px; }
.winctl svg { width: 14px; height: 14px; }

/* Toolbar */
.toolbar { flex: none; height: 51px; padding: 0 9.500px; background: #3b3a3f; border-bottom: 1px solid #2c2b30; display: flex; align-items: center; }
.slot { flex: none; width: 37px; display: flex; justify-content: center; }
.slot svg { width: 22px; height: 22px; }
.ln { fill: none; stroke: #f2f2f4; stroke-width: 1.600; }
.ln.dim { stroke: #828186; }
.ln.soft { stroke: #cfcfd2; }
.mark { margin-left: 167px; }
.urlbar { width: 1142px; height: 40px; margin-left: 10.500px; padding: 0 12px; border-radius: 10px; background: #252429; display: flex; align-items: center; }
.info { width: 17px; height: 17px; margin-right: 18.500px; }
.url { flex: 1; padding-bottom: 2px; font-size: 17px; letter-spacing: -.2px; color: #c1c1c5; white-space: nowrap; }
.url b { font-weight: 400; color: #fff; }
.u-share { width: 21px; height: 21px; }
.u-sep { width: 1px; height: 20px; margin: 0 14px 0 10px; background: #77767b; }
.u-lion { width: 20px; height: 23px; margin-right: 22px; --face: #4b4a60; }
.u-bat { width: 23px; height: 19px; }
.actions { margin-left: auto; display: flex; align-items: center; }
.panel { margin: 0 1px 0 -1px; }
.tb-sep { width: 2px; height: 20px; margin: 0 11.500px; background: #25242a; }

/* Application page */
.page { flex: none; height: 919px; background: #fff; font-family: Inter, sans-serif; color: #101828; }
.ico { width: 1em; height: 1em; margin-right: .5rem; }
.site-head { height: 80px; padding: 0 2rem; display: flex; align-items: center; justify-content: space-between; box-shadow: 0 1px 4px rgba(0,0,0,.1), 0 1px 2.500px rgba(0,0,0,.12); }
.brand { display: flex; align-items: center; gap: .5rem; font-size: 1.250rem; font-weight: 700; color: #1e2939; }
.brand-icon { width: 2rem; height: 2rem; color: #4f39f6; }
.btn { height: 47px; padding: 0 21px; border: 0; border-radius: .5rem; background: #4f39f6; color: #fff; font: 600 .875rem/1.250rem Inter, sans-serif; display: flex; align-items: center; box-shadow: 0 1px 2.500px rgba(0,0,0,.12); }
.btn-new { margin-top: 1px; }
.btn-tall { height: 52px; }
.btn-danger { background: #e7000b; }
.content { width: 52rem; margin: 0 auto; padding-top: 41px; }
.back { height: 1.250rem; margin-bottom: 1rem; display: flex; align-items: center; font-size: .875rem; font-weight: 500; color: #4a5565; }
.card { padding: 1.500rem; border: 1px solid #e5e7eb; border-radius: .5rem; background: #fff; }
.summary { height: 203px; }
.summary-top { display: flex; justify-content: space-between; align-items: flex-start; padding-bottom: 1rem; border-bottom: 1px solid #101828; }
h1 { font-size: 1.875rem; line-height: 2.250rem; font-weight: 700; }
.service { font-size: 1rem; line-height: 1.500rem; color: #6a7282; }
.pill { height: 2rem; padding: 0 .75rem; border-radius: 1rem; background: #fef9c2; color: #894b00; display: flex; align-items: center; font-size: .875rem; font-weight: 600; }
.facts { margin-top: 1rem; display: grid; grid-template-columns: repeat(4, 1fr); gap: 1rem; }
.fact { height: 1.250rem; display: flex; align-items: center; white-space: nowrap; font-size: .875rem; color: #4a5565; }
.fact.price { font-weight: 700; color: #1e2939; }
.details { margin: 2rem 0; display: grid; grid-template-columns: 1fr 1fr; gap: 2rem; }
.details .card { height: 337px; }
h2 { margin-bottom: 1rem; display: flex; align-items: center; font-size: 1.125rem; line-height: 1.750rem; font-weight: 700; color: #1e2939; }
dl { display: flex; flex-direction: column; gap: 1rem; }
dt { font-size: .875rem; line-height: 1.250rem; font-weight: 500; color: #6a7282; }
dd { margin-top: .25rem; font-size: 1rem; line-height: 1.500rem; font-weight: 600; }
.buttons { padding-top: 1.500rem; border-top: 1px solid #e5e7eb; display: flex; gap: 1rem; }

/* Taskbar */
.taskbar { flex: none; height: 60px; border-top: 1px solid #4a464d; display: grid; grid-template-columns: 640px 1fr 330px; align-items: center; color: #fff; font-size: 15px; line-height: 20px; background: linear-gradient(90deg, #211e2b 0, #231d2e 300px, #2a1a31 460px, #311b35 640px, #3a1f2c 800px, #33231f 960px, #351d20 1080px, #42171c 1240px, #45170f 1400px, #42190f 1560px, #351b19 1720px, #251a20 1920px); }
.weather { display: flex; align-items: center; padding-left: 25px; }
.w-icon { position: relative; width: 39px; height: 40px; padding-top: 10px; }
.w-icon svg { width: 30px; height: 26px; }
.badge { position: absolute; left: 14px; top: -3px; width: 20px; height: 20px; border-radius: 50%; background: #ff99a4; color: #111; font-size: 13px; line-height: 20px; text-align: center; }
.w-text { display: flex; flex-direction: column; padding-bottom: 3px; letter-spacing: -.3px; }
.w-sub { color: #c8c4ca; }
.dock { display: flex; align-items: center; padding-bottom: 1px; }
.start { width: 29px; height: 29px; }
.search { width: 275px; height: 40px; margin: 0 5px 0 17px; padding: 0 11px 0 14px; border-radius: 20px; background: linear-gradient(90deg, #4a3748, #513d48 50%, #4a3c3b); border: 1px solid #67545e; display: flex; align-items: center; font-size: 17px; color: #d6ced3; letter-spacing: -.3px; }
.search-text { padding-top: 2px; }
.mag { width: 19px; height: 19px; margin-right: 12px; }
.deity { width: 52px; height: 34px; margin-left: auto; }
.app { flex: none; width: 50px; height: 50px; margin-right: 5px; border-radius: 5px; display: flex; align-items: center; justify-content: center; position: relative; }
.app svg { width: 30px; height: 30px; }
.app.current { background: #4b282e; border: 1px solid #573538; }
.run::after { content: ""; position: absolute; bottom: 1px; left: 21px; width: 8px; height: 4px; border-radius: 2px; background: #a39799; }
.current::after { bottom: 0; left: 14px; width: 20px; background: #4cc2ff; }
.tray { display: flex; align-items: center; padding: 0 0 2px 6px; }
.chev { width: 14px; height: 9px; }
.lang { width: 40px; margin: 0 17px 0 21px; display: flex; flex-direction: column; text-align: center; font-size: 14.500px; }
.wifi { width: 20px; height: 16px; }
.vol { width: 20px; height: 18px; margin: 0 10px; }
.batt { width: 20px; height: 14px; }
.clock { width: 98px; display: flex; flex-direction: column; text-align: right; font-size: 15px; letter-spacing: -.1px; }
.bell { width: 18px; height: 20px; margin-left: 10px; }
```
